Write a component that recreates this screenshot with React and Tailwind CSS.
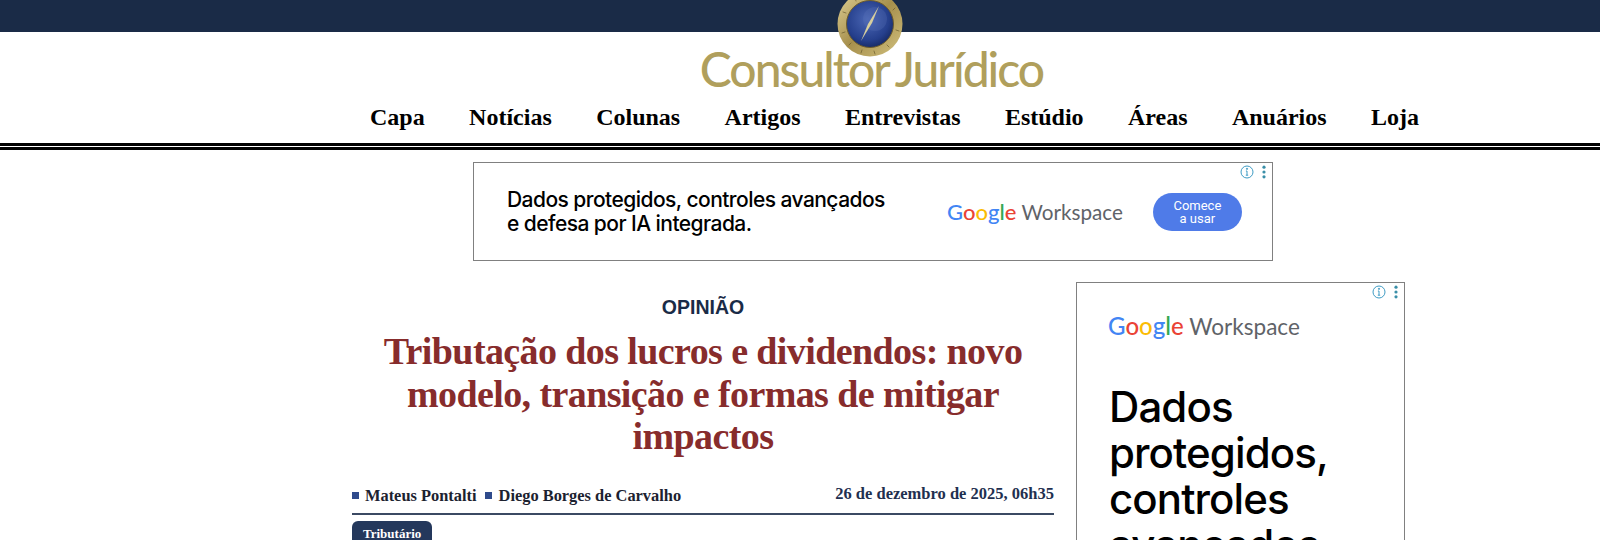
const navItems = ['Capa', 'Notícias', 'Colunas', 'Artigos', 'Entrevistas', 'Estúdio', 'Áreas', 'Anuários', 'Loja'];

const CompassLogo = () => (
	<svg width="66" height="66" viewBox="0 0 66 66">
		<defs>
			<linearGradient id="ring" x1="0" y1="0" x2="1" y2="1">
				<stop offset="0" stopColor="#e0d196" />
				<stop offset="0.5" stopColor="#a68f4c" />
				<stop offset="1" stopColor="#d3c27f" />
			</linearGradient>
			<radialGradient id="face" cx="0.45" cy="0.4" r="0.65">
				<stop offset="0" stopColor="#4a66b4" />
				<stop offset="0.7" stopColor="#253f8c" />
				<stop offset="1" stopColor="#14265c" />
			</radialGradient>
		</defs>
		<circle cx="33" cy="33" r="32.5" fill="url(#ring)" />
		<circle cx="33" cy="33" r="23.5" fill="url(#face)" stroke="#6d5c2c" strokeWidth="1" />
		<circle cx="38" cy="28" r="12" fill="#5f78bd" opacity="0.25" />
		<path d="M42 15 L35 32 L24 50 L31 33 Z" fill="#d8cf9e" />
		<g stroke="#5f5226" strokeWidth="1" strokeLinecap="round" opacity="0.6">
			<path d="M33 3v3M47 6l-1 3M58 17l-2 2M62 40l-3-1M52 56l-2-2M38 63l-1-3M24 62l1-3M12 54l2-2M5 42l3-1M6 21l3 1M18 7l1 3" />
		</g>
	</svg>
);

const InfoIcons = () => (
	<div className="absolute top-[2px] right-[6px] flex items-center gap-[8px]">
		<svg width="14" height="14" viewBox="0 0 14 14" fill="none" stroke="#3f9cc4" strokeWidth="1">
			<circle cx="7" cy="7" r="6" />
			<path d="M7 6v4.2M5.8 10.2h2.4M5.9 6h1.1" />
			<circle cx="7" cy="3.8" r="0.6" fill="#3f9cc4" />
		</svg>
		<svg width="4" height="14" viewBox="0 0 4 14" fill="#3a8fa8">
			<circle cx="2" cy="2.2" r="1.6" />
			<circle cx="2" cy="7" r="1.6" />
			<circle cx="2" cy="11.8" r="1.6" />
		</svg>
	</div>
);

const GoogleWorkspace = ({ className }) => (
	<div className={ `font-['Lato',sans-serif] whitespace-nowrap ${ className }` }>
		<span className="font-medium">
			<span className="text-[#4285f4]">G</span>
			<span className="text-[#ea4335]">o</span>
			<span className="text-[#fbbc05]">o</span>
			<span className="text-[#4285f4]">g</span>
			<span className="text-[#34a853]">l</span>
			<span className="text-[#ea4335]">e</span>
		</span>
		<span className="text-[#5f6368] ml-[0.25em] text-[0.94em]">Workspace</span>
	</div>
);

export default function App() {
	return (
		<div className="h-[540px] overflow-hidden bg-white font-['Liberation_Serif',serif]">
			{ /* Top bar and logo */ }
			<div className="relative h-[32px] bg-[#1a2b47]">
				<div className="absolute left-[837px] top-[-9px]">
					<CompassLogo />
				</div>
			</div>
			<div className="flex justify-center h-[61px] pl-[143px]">
				<div className="font-['Lato',sans-serif] font-medium text-[48px] leading-[73px] tracking-[-2px] text-[#b09f5c] whitespace-nowrap">
					Consultor<span className="ml-[6px]">Jurídico</span>
				</div>
			</div>

			{ /* Nav */ }
			<nav className="flex gap-[44.4px] pl-[370px] h-[50px] pb-[2px] items-center text-[24px] font-bold text-black">
				{ navItems.map( ( item ) => (
					<a key={ item } href="#">{ item }</a>
				) ) }
			</nav>
			<div className="h-[7px] border-y-[3px] border-black" />

			{ /* Top ad */ }
			<div className="relative mt-[12px] ml-[473px] w-[800px] h-[99px] border border-[#808080] flex items-center font-['Inter',sans-serif]">
				<InfoIcons />
				<div className="ml-[33px] w-[398px] text-[21px] leading-[23.5px] font-medium tracking-[-0.55px] text-black">
					Dados protegidos, controles avançados
					<br />
					e defesa por IA integrada.
				</div>
				<GoogleWorkspace className="ml-[42px] text-[22px]" />
				<div className="ml-[30px] w-[89px] h-[38px] rounded-full bg-[#4f7be8] text-white text-[13px] leading-[13px] text-center flex items-center justify-center font-['Roboto',sans-serif]">
					Comece
					<br />
					a usar
				</div>
			</div>

			{ /* Article and side ad */ }
			<div className="flex gap-[22px] mt-[21px] pl-[352px]">
				<div className="w-[702px]">
					<p className="mt-[13px] text-center font-['Liberation_Sans',sans-serif] font-bold text-[19.5px] leading-[24px] text-[#1a2b47]">OPINIÃO</p>
					<h1 className="mt-[11px] px-[20px] text-center font-bold text-[38px] leading-[42.5px] tracking-[-0.6px] text-[#872c2c]">
						Tributação dos lucros e dividendos: novo modelo, transição e formas de mitigar impactos
					</h1>
					<div className="mt-[20px] flex justify-between items-start h-[37px] border-b-2 border-[#3b4a63]">
						<div className="flex items-center mt-[8px] text-[16.4px] leading-[20px] font-bold text-[#1c2230]">
							<span className="w-[7px] h-[7px] bg-[#2f4b8c] mr-[6px]" />
							<span>Mateus Pontalti</span>
							<span className="w-[7px] h-[7px] bg-[#2f4b8c] ml-[8px] mr-[7px]" />
							<span>Diego Borges de Carvalho</span>
						</div>
						<div className="mt-[6px] text-[16.5px] leading-[20px] font-bold text-[#1f3050]">26 de dezembro de 2025, 06h35</div>
					</div>
					<div className="mt-[6px] inline-block rounded-[6px] bg-[#24385c] px-[11px] py-[4px] text-white font-bold text-[13px] leading-[18px]">Tributário</div>
				</div>
				<aside className="relative w-[329px] h-[300px] border border-[#808080] font-['Inter',sans-serif]">
					<InfoIcons />
					<GoogleWorkspace className="mt-[28px] ml-[31px] text-[24px] leading-[30px]" />
					<div className="mt-[42px] ml-[32px] text-[42px] leading-[46px] font-medium tracking-[-0.9px] text-black">
						Dados
						<br />
						protegidos,
						<br />
						controles
						<br />
						avançados
					</div>
				</aside>
			</div>
		</div>
	);
}
